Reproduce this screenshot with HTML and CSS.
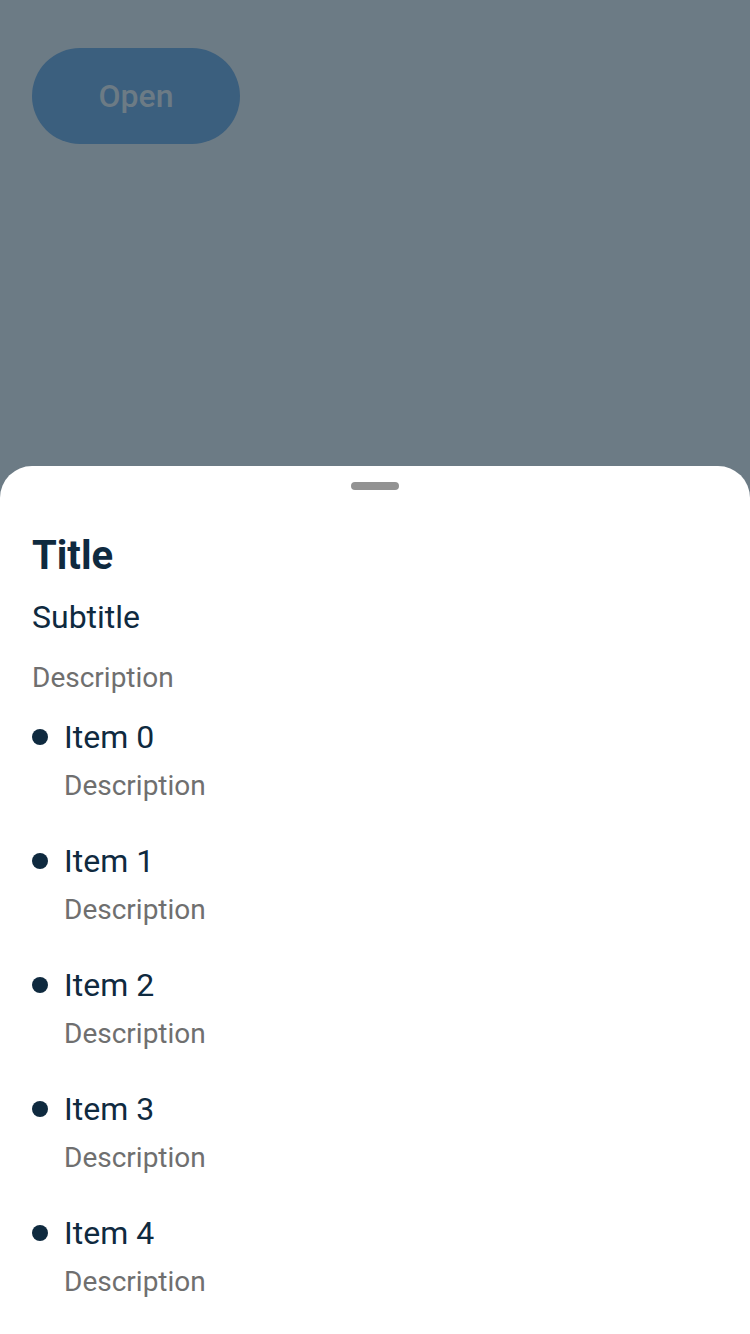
FILE: index.html
```html
<!DOCTYPE html>
<html>
<head>
<meta charset="utf-8">
<link rel="stylesheet" href="styles.css">
</head>
<body>
<div class="page">
  <div class="backdrop">
    <div class="open-btn">Open</div>
  </div>
  <div class="sheet">
    <div class="handle"></div>
    <div class="title">Title</div>
    <div class="subtitle">Subtitle</div>
    <div class="desc">Description</div>
    <ul class="items">
      <li class="item"><span class="dot"></span><div class="item-body"><div class="item-name">Item 0</div><div class="item-desc">Description</div></div></li>
      <li class="item"><span class="dot"></span><div class="item-body"><div class="item-name">Item 1</div><div class="item-desc">Description</div></div></li>
      <li class="item"><span class="dot"></span><div class="item-body"><div class="item-name">Item 2</div><div class="item-desc">Description</div></div></li>
      <li class="item"><span class="dot"></span><div class="item-body"><div class="item-name">Item 3</div><div class="item-desc">Description</div></div></li>
      <li class="item"><span class="dot"></span><div class="item-body"><div class="item-name">Item 4</div><div class="item-desc">Description</div></div></li>
    </ul>
  </div>
</div>
</body>
</html>
```

FILE: styles.css
```css
html, body {
  margin: 0;
  padding: 0;
}
body {
  font-family: Roboto, "Noto Sans", sans-serif;
  background: #6c7b85;
}
.page {
  width: 750px;
  height: 1334px;
  display: flex;
  flex-direction: column;
  overflow: hidden;
}
.backdrop {
  height: 466px;
  flex: none;
  padding: 48px 32px 0;
  box-sizing: border-box;
  background: #6c7b85;
}
.open-btn {
  width: 208px;
  height: 96px;
  border-radius: 48px;
  background: #3b5f7e;
  color: #6c7b85;
  font-size: 32px;
  font-weight: 500;
  display: flex;
  align-items: center;
  justify-content: center;
}
.sheet {
  flex: 1;
  background: #ffffff;
  border-radius: 32px 32px 0 0;
  padding: 16px 32px 0;
  display: flex;
  flex-direction: column;
}
.handle {
  width: 48px;
  height: 8px;
  border-radius: 4px;
  background: #929292;
  align-self: center;
}
.title {
  margin-top: 42px;
  font-size: 40px;
  font-weight: 700;
  line-height: 48px;
  color: #0f2a3f;
}
.subtitle {
  margin-top: 17px;
  font-size: 32px;
  line-height: 40px;
  color: #0f2a3f;
}
.desc {
  margin-top: 23px;
  font-size: 28px;
  line-height: 36px;
  color: #6f6f6f;
}
.items {
  list-style: none;
  margin: 19px 0 0;
  padding: 0;
  display: flex;
  flex-direction: column;
  gap: 31px;
}
.item {
  display: flex;
  align-items: flex-start;
  gap: 16px;
}
.dot {
  width: 16px;
  height: 16px;
  border-radius: 50%;
  background: #0f2a3f;
  margin-top: 14px;
  flex: none;
}
.item-name {
  font-size: 32px;
  line-height: 44px;
  color: #0f2a3f;
}
.item-desc {
  margin-top: 5px;
  font-size: 28px;
  line-height: 44px;
  color: #6f6f6f;
}
```
